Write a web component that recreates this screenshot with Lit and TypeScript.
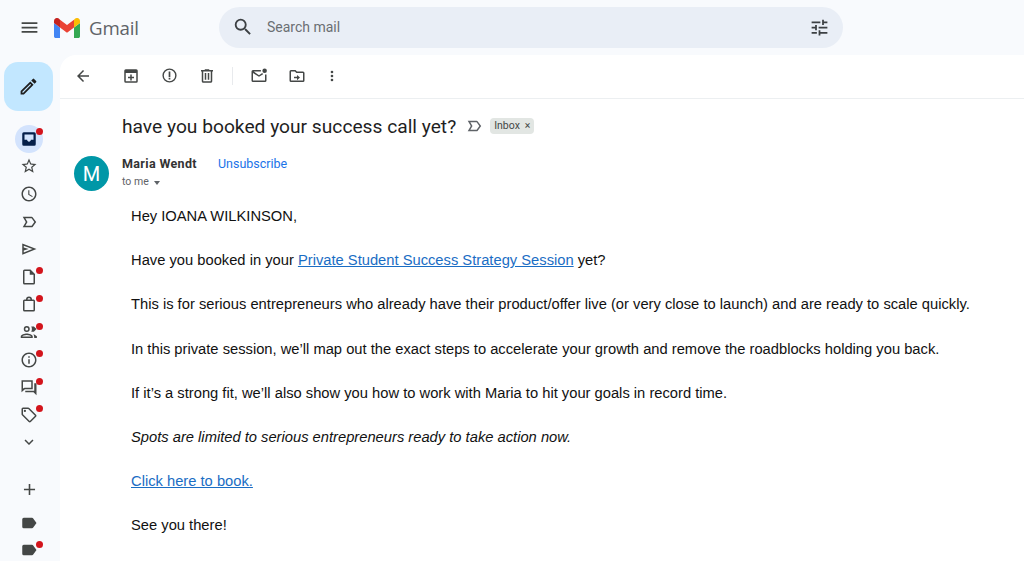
import { LitElement, css, html, svg } from "lit";
import { customElement } from "lit/decorators.js";

const icon = (body: unknown, size = 18) => html`<svg width=${size} height=${size} viewBox="0 0 24 24" fill="currentColor" fill-rule="evenodd">${body}</svg>`;

const P = {
  menu: svg`<path d="M3 18h18v-2H3v2zm0-5h18v-2H3v2zm0-7v2h18V6H3z"/>`,
  search: svg`<path d="M15.5 14h-.79l-.28-.27A6.47 6.47 0 0 0 16 9.5 6.5 6.5 0 1 0 9.5 16c1.61 0 3.09-.59 4.23-1.57l.27.28v.79l5 4.99L20.49 19l-4.99-5zm-6 0C7.01 14 5 11.99 5 9.5S7.01 5 9.5 5 14 7.01 14 9.5 11.99 14 9.5 14z"/>`,
  tune: svg`<path d="M3 17v2h6v-2H3zM3 5v2h10V5H3zm10 16v-2h8v-2h-8v-2h-2v6h2zM7 9v2H3v2h4v2h2V9H7zm14 4v-2H11v2h10zm-6-4h2V7h4V5h-4V3h-2v6z"/>`,
  pencil: svg`<path d="M3 17.250V21h3.750L17.810 9.940l-3.750-3.750L3 17.250zM5.920 19H5v-.92l9.060-9.060.92.92L5.920 19z"/><path d="M20.710 7.040a1 1 0 0 0 0-1.410l-2.340-2.340a1 1 0 0 0-1.410 0l-1.830 1.830 3.750 3.750 1.830-1.830z"/>`,
  inbox: svg`<path d="M19 3H5a2 2 0 0 0-2 2v14a2 2 0 0 0 2 2h14a2 2 0 0 0 2-2V5a2 2 0 0 0-2-2zM6 6h12v7h-3.500c0 1.400-1.100 2.500-2.500 2.500S9.500 14.400 9.500 13H6z"/>`,
  star: svg`<path d="M22 9.24l-7.19-.62L12 2 9.19 8.63 2 9.24l5.46 4.73L5.82 21 12 17.27 18.18 21l-1.63-7.03L22 9.24zM12 15.4l-3.76 2.27 1-4.28-3.32-2.88 4.38-.38L12 6.1l1.71 4.04 4.38.38-3.32 2.88 1 4.28L12 15.4z"/>`,
  clock: svg`<path d="M11.99 2C6.47 2 2 6.48 2 12s4.47 10 9.99 10C17.52 22 22 17.52 22 12S17.52 2 11.99 2zM12 20c-4.42 0-8-3.58-8-8s3.58-8 8-8 8 3.58 8 8-3.58 8-8 8zm.5-13H11v6l5.25 3.15.75-1.23-4.500-2.670V7z"/>`,
  important: svg`<path d="M17.030 5.970A2 2 0 0 0 15.500 5H3.600l4.100 7-4.100 7h11.900c.63 0 1.200-.3 1.550-.8L21.600 12l-4.570-6.030zM15.500 17H7.100l2.900-5-2.900-5h8.400l3.600 5-3.600 5z"/>`,
  send: svg`<path d="M3 4.500v15L22 12zM5 7.500L16.600 12 5 16.500v-2.600l6.500-1.900-6.500-1.900z"/>`,
  doc: svg`<path d="M14 2H6a2 2 0 0 0-2 2v16a2 2 0 0 0 2 2h12a2 2 0 0 0 2-2V8l-6-6zm4 18H6V4h7v5h5v11z"/>`,
  bag: svg`<path d="M18 6h-2a4 4 0 0 0-8 0H6a2 2 0 0 0-2 2v12a2 2 0 0 0 2 2h12a2 2 0 0 0 2-2V8a2 2 0 0 0-2-2zm-6-2a2 2 0 0 1 2 2h-4a2 2 0 0 1 2-2zm6 16H6V8h12v12z"/>`,
  people: svg`<path d="M9 12a4 4 0 1 0 0-8 4 4 0 0 0 0 8zm0-6a2 2 0 1 1 0 4 2 2 0 0 1 0-4zm0 8c-2.670 0-8 1.340-8 4v2h16v-2c0-2.660-5.330-4-8-4zm-6 4c.2-.72 3.300-2 6-2s5.800 1.280 6 2H3z"/><path d="M15 4.500h3.500L22 8l-3.500 3.500H15c1.200-2.200 1.200-4.800 0-7zM18 14.500l4.500 3v2.500H19c0-2-.3-4-1-5.500z"/>`,
  info: svg`<path d="M11 7h2v2h-2zm0 4h2v6h-2zm1-9C6.480 2 2 6.480 2 12s4.480 10 10 10 10-4.480 10-10S17.520 2 12 2zm0 18c-4.410 0-8-3.590-8-8s3.590-8 8-8 8 3.590 8 8-3.590 8-8 8z"/>`,
  forum: svg`<path d="M2 3h15v12H6.500L2 19zM4 5v9l2-1h9V5zM19 7h3v16l-4-4H7v-2h12z"/>`,
  tag: svg`<path d="M21.410 11.580l-9-9A2 2 0 0 0 11 2H4a2 2 0 0 0-2 2v7c0 .55.22 1.050.59 1.420l9 9c.36.36.86.58 1.410.58s1.050-.22 1.410-.59l7-7c.37-.36.59-.86.59-1.410s-.23-1.060-.59-1.420zM13 20L4 11V4h7l9 9z"/><circle cx="6.500" cy="6.500" r="1.500"/>`,
  chevron: svg`<path d="M16.590 8.590L12 13.170 7.410 8.590 6 10l6 6 6-6z"/>`,
  plus: svg`<path d="M19 13h-6v6h-2v-6H5v-2h6V5h2v6h6v2z"/>`,
  label: svg`<path d="M17.630 5.840C17.270 5.330 16.670 5 16 5H5a2 2 0 0 0-2 2v10a2 2 0 0 0 2 2h11c.67 0 1.270-.33 1.630-.84L22 12z"/>`,
  back: svg`<path d="M20 11H7.830l5.590-5.590L12 4l-8 8 8 8 1.410-1.410L7.830 13H20v-2z"/>`,
  archive: svg`<path d="M19 3H5a2 2 0 0 0-2 2v14a2 2 0 0 0 2 2h14a2 2 0 0 0 2-2V5a2 2 0 0 0-2-2zm0 16H5V8h14v11zm-8-1h2v-3h3v-2h-3v-3h-2v3H8v2h3v3z"/>`,
  report: svg`<path d="M12 2a10 10 0 1 0 0 20 10 10 0 0 0 0-20zm0 18a8 8 0 1 1 0-16 8 8 0 0 1 0 16zM10.800 6.500h2.400v7.500h-2.400zm0 8.800h2.400v2.400h-2.400z"/>`,
  trash: svg`<path d="M15 4V3H9v1H4v2h1v13c0 1.100.9 2 2 2h10c1.100 0 2-.9 2-2V6h1V4h-5zm2 15H7V6h10v13zM9 8h2v9H9zm4 0h2v9h-2z"/>`,
  unread: svg`<path d="M14.500 4H4a2 2 0 0 0-2 2v12a2 2 0 0 0 2 2h16a2 2 0 0 0 2-2v-8h-2v8H4V8l8 5 5.500-3.400-1.200-1.600L12 11 5 6h9.500z"/><circle cx="19.500" cy="5" r="3"/>`,
  move: svg`<path d="M20 6h-8l-2-2H4a2 2 0 0 0-2 2v12a2 2 0 0 0 2 2h16a2 2 0 0 0 2-2V8a2 2 0 0 0-2-2zm0 12H4V6h5.170l2 2H20v10zM12 15H8v-2h4v-2.500l4 3.500-4 3.500z"/>`,
  more: svg`<path d="M12 8a2 2 0 1 0 0-4 2 2 0 0 0 0 4zm0 2a2 2 0 1 0 0 4 2 2 0 0 0 0-4zm0 6a2 2 0 1 0 0 4 2 2 0 0 0 0-4z"/>`,
};

const rail: [unknown, boolean][] = [
  [P.star, false], [P.clock, false], [P.important, false], [P.send, false],
  [P.doc, true], [P.bag, true], [P.people, true], [P.info, true], [P.forum, true], [P.tag, true],
  [P.chevron, false],
];

@customElement("app-root")
export class AppRoot extends LitElement {
  static styles = css`
    :host {
      display: block;
      width: 1024px;
      height: 561px;
      overflow: hidden;
      background: #f8fafd;
      color: #444746;
      font-family: "Liberation Sans", Arial, sans-serif;
    }
    svg { display: block; }

    header { display: flex; align-items: center; height: 55px; }
    .burger { width: 58px; display: flex; justify-content: center; }
    .logo { display: flex; align-items: center; gap: 9px; width: 165px; flex: none; margin-left: -4px; }
    .wordmark { font: 400 18.700px "Open Sans", sans-serif; color: #5f6368; letter-spacing: -0.2px; }
    .search {
      width: 624px;
      height: 41px;
      border-radius: 21px;
      background: #e9eef6;
      display: flex;
      align-items: center;
      padding: 0 13px;
      box-sizing: border-box;
      margin-top: -1px;
      color: #3c4043;
    }
    .search span { flex: 1; margin-left: 13px; font: 14px Roboto, sans-serif; color: #6b6f73; }

    .layout { display: flex; height: 506px; }
    .rail { width: 60px; flex: none; display: flex; flex-direction: column; align-items: center; }
    .compose {
      width: 49px;
      height: 49px;
      border-radius: 14px;
      background: #c2e7ff;
      color: #1f1f1f;
      display: flex;
      align-items: center;
      justify-content: center;
      margin: 7px 3px 0 0;
      flex: none;
    }
    .items { display: flex; flex-direction: column; margin-top: 14px; margin-right: 2px; }
    .item {
      position: relative;
      width: 28px;
      height: 27.600px;
      display: flex;
      align-items: center;
      justify-content: center;
    }
    .item.current::before {
      content: "";
      position: absolute;
      inset: 0;
      border-radius: 50%;
      background: #d3e3fd;
    }
    .item.current { color: #041e49; }
    .item svg { position: relative; }
    .dot {
      position: absolute;
      top: 4.500px;
      right: 0;
      width: 7px;
      height: 7px;
      border-radius: 50%;
      background: #d3141c;
    }
    .item.current .dot { top: 3px; }
    .spacer { height: 20px; }
    .spacer.small { height: 5px; }

    main {
      flex: 1;
      background: #fff;
      border-top-left-radius: 16px;
      display: flex;
      flex-direction: column;
    }
    .toolbar {
      height: 41px;
      padding-bottom: 2px;
      flex: none;
      display: flex;
      align-items: center;
      gap: 20px;
      border-bottom: 1px solid #eceff1;
      padding-left: 14px;
      color: #444746;
    }
    .tool { width: 18px; display: flex; justify-content: center; }
    .tool.back { margin-right: 10px; }
    .tool.more { margin-left: -3px; }
    .sep { width: 1px; height: 18px; background: #e8eaed; margin: 0 -3px 0 -4px; }

    .subject { display: flex; align-items: center; padding: 8px 0 0 62px; height: 38px; flex: none; }
    .subject h1 { margin: 0; font: 400 19.200px Roboto, sans-serif; color: #1f1f1f; }
    .imp { margin-left: 9px; color: #5f6368; }
    .chip {
      margin-left: 7px;
      background: #e2e6e3;
      border-radius: 4px;
      font: 10.500px Roboto, sans-serif;
      color: #444746;
      padding: 1px 4px 2px 4px;
      display: flex;
      gap: 5px;
    }
    .message { display: flex; padding: 11px 0 0 14px; }
    .avatar {
      width: 35px;
      height: 35px;
      border-radius: 50%;
      background: #0097a7;
      color: #fff;
      font: 20px Roboto, sans-serif;
      display: flex;
      align-items: center;
      justify-content: center;
      flex: none;
    }
    .content { margin-left: 13px; }
    .from { display: flex; align-items: baseline; }
    .from b { color: #333; font: 700 12.500px Roboto, sans-serif; letter-spacing: 0.35px; }
    .from a { margin-left: 21px; color: #1a73e8; font: 12.500px Roboto, sans-serif; }
    .to { display: flex; align-items: center; gap: 5px; margin-top: 4px; font: 10.500px Roboto, sans-serif; color: #5f6368; }
    .caret { width: 0; height: 0; border: 3.500px solid transparent; border-top: 4px solid #5f6368; border-bottom: 0; margin-top: 2px; }
    .body {
      margin-top: 17px;
      margin-left: 9px;
      font-size: 14.720px;
      line-height: 22.100px;
      color: #111;
      white-space: nowrap;
    }
    .body p { margin: 0 0 22.100px; }
    .body a { color: #1a6dc4; text-decoration: underline; }
  `;

  render() {
    return html`
      <header>
        <div class="burger">${icon(P.menu, 21)}</div>
        <div class="logo">
          <svg width="26" height="20" viewBox="0 0 26 20">
            <path fill="#4285f4" d="M0 18.200C0 19.200.8 20 1.800 20H6V9.500L0 5z"/>
            <path fill="#34a853" d="M20 20h4.200c1 0 1.800-.8 1.800-1.800V5l-6 4.500z"/>
            <path fill="#fbbc04" d="M20 1.700v7.800l6-4.500V3c0-2.500-2.800-3.900-4.800-2.400z"/>
            <path fill="#ea4335" d="M6 9.500V1.700L13 7l7-5.300v7.800L13 14.700z"/>
            <path fill="#c5221f" d="M0 3v2l6 4.500V1.700L4.800.6C2.800-.9 0 .5 0 3z"/>
          </svg>
          <span class="wordmark">Gmail</span>
        </div>
        <div class="search">
          ${icon(P.search, 22)}
          <span>Search mail</span>
          ${icon(P.tune, 21)}
        </div>
      </header>
      <div class="layout">
        <nav class="rail">
          <div class="compose">${icon(P.pencil, 21)}</div>
          <div class="items">
            <div class="item current">${icon(P.inbox, 18)}<i class="dot"></i></div>
            ${rail.map(([p, dot]) => html`<div class="item">${icon(p, 18)}${dot ? html`<i class="dot"></i>` : ""}</div>`)}
            <div class="spacer"></div>
            <div class="item">${icon(P.plus, 19)}</div>
            <div class="spacer small"></div>
            <div class="item">${icon(P.label, 18)}</div>
            <div class="item">${icon(P.label, 18)}<i class="dot"></i></div>
          </div>
        </nav>
        <main>
          <div class="toolbar">
            <span class="tool back">${icon(P.back, 18)}</span>
            <span class="tool">${icon(P.archive, 18)}</span>
            <span class="tool">${icon(P.report, 17)}</span>
            <span class="tool">${icon(P.trash, 18)}</span>
            <span class="sep"></span>
            <span class="tool">${icon(P.unread, 18)}</span>
            <span class="tool">${icon(P.move, 18)}</span>
            <span class="tool more">${icon(P.more, 16)}</span>
          </div>
          <div class="subject">
            <h1>have you booked your success call yet?</h1>
            <span class="imp">${icon(P.important, 18)}</span>
            <span class="chip">Inbox <span>×</span></span>
          </div>
          <div class="message">
            <div class="avatar">M</div>
            <div class="content">
              <div class="from"><b>Maria Wendt</b><a>Unsubscribe</a></div>
              <div class="to">to me <i class="caret"></i></div>
              <div class="body">
                <p>Hey IOANA WILKINSON,</p>
                <p>Have you booked in your <a href="#">Private Student Success Strategy Session</a> yet?</p>
                <p>This is for serious entrepreneurs who already have their product/offer live (or very close to launch) and are ready to scale quickly.</p>
                <p>In this private session, we’ll map out the exact steps to accelerate your growth and remove the roadblocks holding you back.</p>
                <p>If it’s a strong fit, we’ll also show you how to work with Maria to hit your goals in record time.</p>
                <p><em>Spots are limited to serious entrepreneurs ready to take action now.</em></p>
                <p><a href="#">Click here to book.</a></p>
                <p>See you there!</p>
              </div>
            </div>
          </div>
        </main>
      </div>
    `;
  }
}
